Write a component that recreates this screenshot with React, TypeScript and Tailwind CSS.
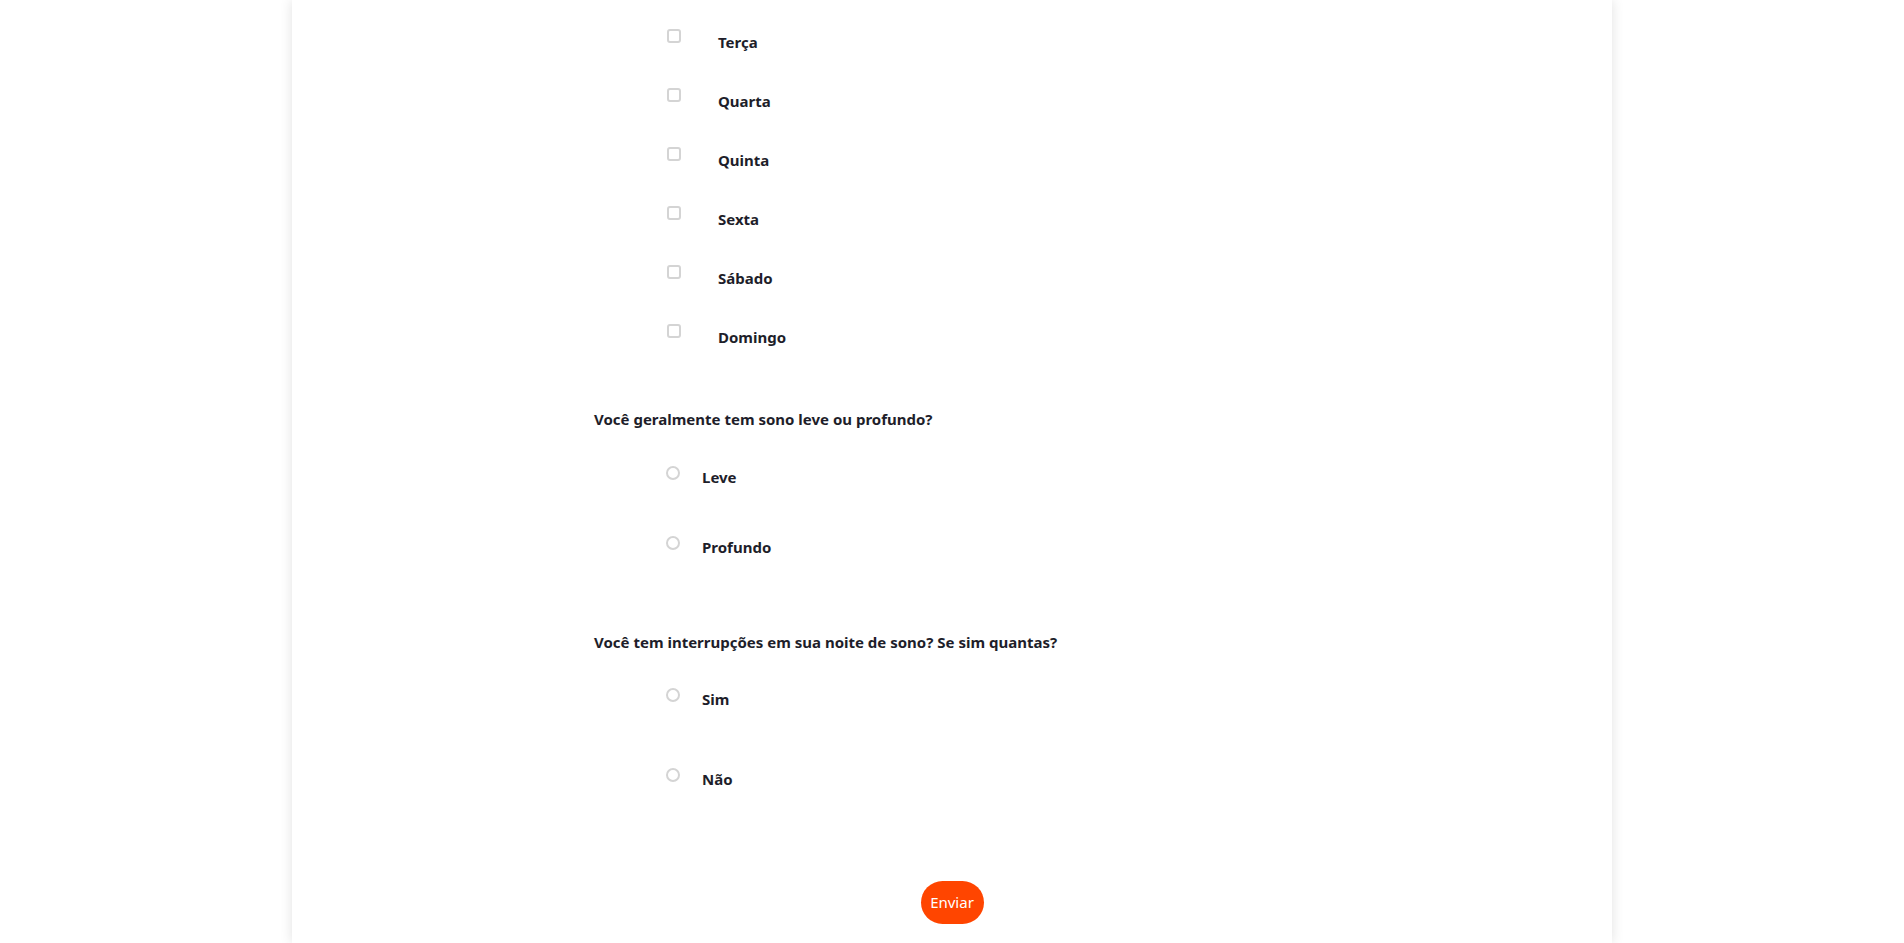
import React from "react";

const days = ["Terça", "Quarta", "Quinta", "Sexta", "Sábado", "Domingo"];

function Checkbox() {
  return <span className="block w-[14px] h-[14px] shrink-0 rounded-[3px] border-2 border-[#d4d4d4] bg-white" />;
}

function Radio() {
  return <span className="block w-[14px] h-[14px] shrink-0 rounded-full border-2 border-[#d4d4d4] bg-white" />;
}

export default function App() {
  return (
    <div className="min-h-[943px] bg-white font-['Noto_Sans',sans-serif] text-[#1e1e2a]">
      <div className="mx-auto w-[1320px] min-h-[943px] bg-white shadow-[0_0_12px_rgba(0,0,0,0.12)]">
        <div className="pt-[29px] pl-[302px]">
          <div className="pl-[73px]">
            {days.map((d) => (
              <div key={d} className="flex items-start h-[59px]">
                <Checkbox />
                <span className="ml-[37px] mt-[1px] text-[15px] leading-[24px] font-bold">{d}</span>
              </div>
            ))}
          </div>

          <p className="mt-[24px] text-[15px] leading-[24px] font-bold">Você geralmente tem sono leve ou profundo?</p>
          <div className="mt-[34px] pl-[72px]">
            {["Leve", "Profundo"].map((o) => (
              <div key={o} className="flex items-start h-[70px]">
                <span className="mt-[1px]"><Radio /></span>
                <span className="ml-[22px] text-[15px] leading-[24px] font-bold">{o}</span>
              </div>
            ))}
          </div>

          <p className="mt-[25px] text-[15px] leading-[24px] font-bold">Você tem interrupções em sua noite de sono? Se sim quantas?</p>
          <div className="mt-[33px] pl-[72px]">
            {["Sim", "Não"].map((o) => (
              <div key={o} className="flex items-start h-[80px]">
                <span className="mt-[1px]"><Radio /></span>
                <span className="ml-[22px] text-[15px] leading-[24px] font-bold">{o}</span>
              </div>
            ))}
          </div>
        </div>
        <div className="flex justify-center mt-[34px]">
          <button className="w-[63px] h-[43px] rounded-full bg-[#ff4500] text-white text-[15px] leading-none font-['Noto_Sans',sans-serif]">
            Enviar
          </button>
        </div>
      </div>
    </div>
  );
}
